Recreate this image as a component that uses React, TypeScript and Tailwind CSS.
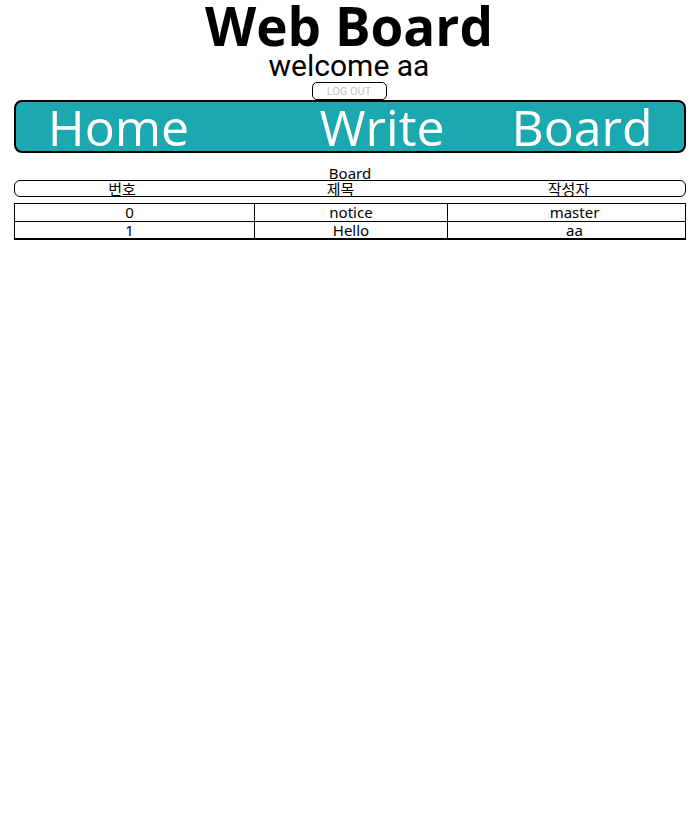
// App.tsx

interface Post {
  id: number;
  title: string;
  writer: string;
}

const posts: Post[] = [
  { id: 0, title: "notice", writer: "master" },
  { id: 1, title: "Hello", writer: "aa" },
];

const NavBar = () => {
  return (
    <div className="ml-[14px] mr-[12px] h-[53px] rounded-[8px] border-2 border-black bg-[#1ca8b0] flex items-center text-white text-[50px] leading-none font-['Open_Sans',sans-serif]">
      <span className="w-[205px] flex justify-center whitespace-nowrap">Home</span>
      <span className="w-[322px] flex justify-center whitespace-nowrap">Write</span>
      <span className="w-[78px] flex justify-center whitespace-nowrap">Board</span>
    </div>
  );
};

const BoardTable = () => {
  return (
    <div className="ml-[14px] mr-[12px] font-['Noto_Sans','Noto_Sans_CJK_KR',sans-serif] text-[15px] text-black">
      <div className="text-center leading-[16px] h-[15px] mt-[12px]">Board</div>
      <div className="h-[17px] rounded-[6px] border border-black flex items-center leading-none pt-[2px]">
        <span className="w-[215px] text-center">번호</span>
        <span className="w-[224px] text-center">제목</span>
        <span className="w-[234px] text-center">작성자</span>
      </div>
      <div className="mt-[6px] border border-black border-b-2">
        {posts.map((post, i) => (
          <div
            key={post.id}
            className={`flex h-[17px] items-center leading-none ${i > 0 ? "border-t border-black" : ""}`}
          >
            <span className="w-[239px] h-full flex items-center justify-center pr-[10px]">{post.id}</span>
            <span className="w-[193px] h-full flex items-center justify-center border-l border-black">{post.title}</span>
            <span className="flex-1 h-full flex items-center justify-center border-l border-black pl-[16px]">{post.writer}</span>
          </div>
        ))}
      </div>
    </div>
  );
};

export default function App() {
  return (
    <div className="w-[698px] min-h-[829px] bg-white">
      <div className="flex flex-col items-center">
        <h1 className="text-[53px] font-bold leading-none h-[50px] flex items-center font-['Open_Sans',sans-serif]">
          Web Board
        </h1>
        <div className="text-[30px] leading-none h-[32px] flex items-center font-['Roboto',sans-serif]">welcome aa</div>
        <button className="w-[75px] h-[18px] rounded-[5px] border border-black text-[11px] leading-none text-[#c4c4c4] flex items-center justify-center font-['Roboto',sans-serif]">
          LOG OUT
        </button>
      </div>
      <NavBar />
      <BoardTable />
    </div>
  );
}
